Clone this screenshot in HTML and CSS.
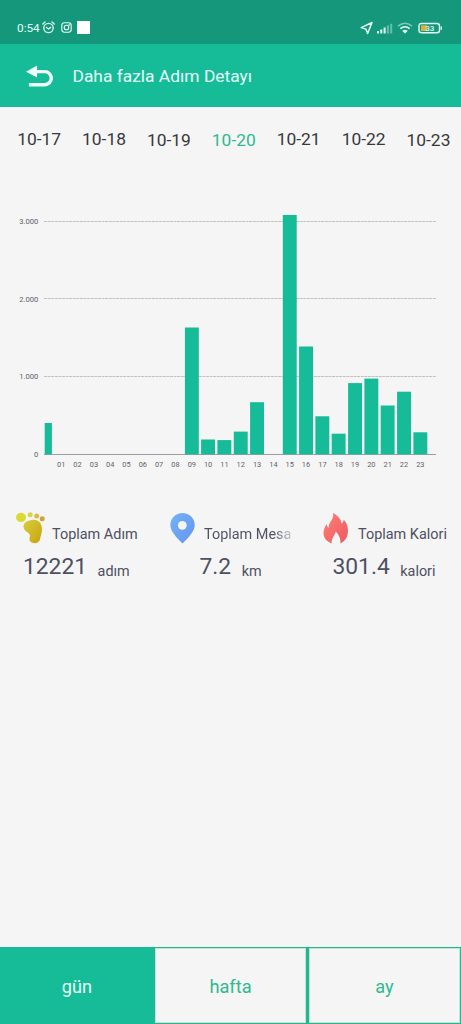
FILE: index.html
```html
<!DOCTYPE html>
<html lang="tr">
<head>
<meta charset="utf-8">
<title>Daha fazla Adım Detayı</title>
<link rel="stylesheet" href="styles.css">
</head>
<body>
<div class="screen">
  <div class="status">
    <span class="clock">0:54</span>
    <svg class="alarm" width="13" height="13" viewBox="0 0 13 13" fill="none" stroke="#e2fff6" stroke-width="1.3" stroke-linecap="round"><circle cx="6.5" cy="7" r="4.7"/><path d="M.8 3 3 1M12.2 3 10 1M4.5 6.5 6.5 8l2.2-1.6"/></svg>
    <svg class="insta" width="11" height="11" viewBox="0 0 11 11" fill="none" stroke="#e2fff6" stroke-width="1.1"><rect x=".8" y=".8" width="9.4" height="9.4" rx="2.6"/><circle cx="5.5" cy="5.5" r="2.3"/><circle cx="8.2" cy="2.8" r=".3"/></svg>
    <span class="square"></span>
    <svg class="system" width="83" height="14" viewBox="0 0 83 14">
      <path d="M1.2 6.6 12 1.5 7.6 12.5 5.9 8.1Z" fill="none" stroke="#e2fff6" stroke-width="1.5" stroke-linejoin="round"/>
      <g fill="#e2fff6"><rect x="17" y="10" width="2" height="2.5"/><rect x="20.3" y="8.5" width="2" height="4"/><rect x="23.6" y="6.5" width="2" height="6"/><g opacity=".4"><rect x="26.9" y="4.5" width="2" height="8"/><rect x="30.2" y="2.8" width="2" height="9.7"/></g></g>
      <g fill="none" stroke="#e2fff6" stroke-width="1.5"><path d="M38 5.2Q45 -.6 52 5.2" opacity=".5"/><path d="M40.4 7.7Q45 4 49.6 7.7"/></g><path d="M42.3 9.7Q45 7.8 47.7 9.7L45 12.7Z" fill="#e2fff6"/>
      <rect x="59" y="2.5" width="20.5" height="9.2" rx="2.5" fill="none" stroke="#e2fff6" stroke-width="1.4"/><rect x="61" y="4.3" width="6" height="5.7" fill="#e2ae35"/><path d="M81.3 5.5v3.3" stroke="#e2fff6" stroke-width="1.4"/>
      <text class="charge" x="69.7" y="10.1">33</text>
    </svg>
  </div>
  <header class="header">
    <svg class="back" width="28" height="23" viewBox="0 0 28 23"><path d="M9 6.5h10.5a6 6 0 0 1 0 13.5H3" fill="none" stroke="#effffa" stroke-width="3.5"/><path d="M0 6.5 11.5 0v12.5Z" fill="#effffa"/></svg>
    <h1 class="title">Daha fazla Adım Detayı</h1>
  </header>
  <nav class="dates">
    <span>10-17</span><span>10-18</span><span class="low">10-19</span><span class="low current">10-20</span><span>10-21</span><span>10-22</span><span class="low">10-23</span>
  </nav>
  <svg class="chart" width="461" height="280" viewBox="0 200 461 280">
    <g class="grid"><path d="M44 221.5H436M44 298.5H436M44 376.5H436"/></g>
    <path class="axis" d="M44 454.5H436"/>
    <g class="bars">
      <rect x="44.7" y="423" width="7.2" height="31.3"/>
      <rect x="184.9" y="327.5" width="13.9" height="126.8"/>
      <rect x="201.1" y="439.5" width="13.9" height="14.8"/>
      <rect x="217.4" y="440.1" width="13.9" height="14.2"/>
      <rect x="233.8" y="431.6" width="13.9" height="22.7"/>
      <rect x="250.1" y="402.2" width="13.9" height="52.1"/>
      <rect x="282.8" y="215" width="13.9" height="239.3"/>
      <rect x="299.1" y="346.5" width="13.9" height="107.8"/>
      <rect x="315.4" y="416.3" width="13.9" height="38"/>
      <rect x="331.7" y="433.7" width="13.9" height="20.6"/>
      <rect x="348.1" y="383.1" width="13.9" height="71.2"/>
      <rect x="364.4" y="378.6" width="13.9" height="75.7"/>
      <rect x="380.7" y="405.5" width="13.9" height="48.8"/>
      <rect x="397.1" y="391.7" width="13.9" height="62.6"/>
      <rect x="413.4" y="432.3" width="13.9" height="22"/>
    </g>
    <g class="tick scale"><text x="38.4" y="223.9">3.000</text><text x="38.4" y="301.5">2.000</text><text x="38.4" y="379.1">1.000</text><text x="38.4" y="456.9">0</text></g>
    <g class="tick hours">
      <text x="61.2" y="467">01</text><text x="77.5" y="467">02</text><text x="93.9" y="467">03</text><text x="110.2" y="467">04</text><text x="126.5" y="467">05</text><text x="142.8" y="467">06</text><text x="159.1" y="467">07</text><text x="175.4" y="467">08</text><text x="191.8" y="467">09</text><text x="208.1" y="467">10</text><text x="224.4" y="467">11</text><text x="240.7" y="467">12</text><text x="257.1" y="467">13</text><text x="273.4" y="467">14</text><text x="289.7" y="467">15</text><text x="306" y="467">16</text><text x="322.4" y="467">17</text><text x="338.7" y="467">18</text><text x="355" y="467">19</text><text x="371.3" y="467">20</text><text x="387.7" y="467">21</text><text x="404" y="467">22</text><text x="420.3" y="467">23</text>
    </g>
  </svg>
  <section class="stats">
    <div class="stat steps">
      <div class="label"><svg width="32" height="32" viewBox="0 0 32 32"><defs><linearGradient id="foot" x1="0" y1="0" x2="1" y2="1"><stop offset="0" stop-color="#d6cf3b"/><stop offset="1" stop-color="#caa20f"/></linearGradient></defs><ellipse cx="5" cy="5.4" rx="5" ry="4.6" fill="#dbda31"/><circle cx="14.2" cy="2.8" r="2.5" fill="#dbd24b"/><circle cx="20.7" cy="4" r="2.5" fill="#d8bd43"/><circle cx="26.2" cy="6.8" r="2.5" fill="#cfa536"/><path d="M16 8C22 7 26 11 26 17C26 22 24.5 24 24 27.5C23 31.5 17 32.2 14.5 29.8C12 27 15 24.5 13.5 22.2C11.8 20 7.5 19 7.5 14.6C7.5 10.5 11.5 8.5 16 8Z" fill="url(#foot)"/></svg><span>Toplam Adım</span></div>
      <div class="value"><b>12221</b><span>adım</span></div>
    </div>
    <div class="stat distance">
      <div class="label"><svg width="26" height="32" viewBox="0 0 26 32"><defs><linearGradient id="pin" x1="0" y1="0" x2="1" y2="1"><stop offset="0" stop-color="#73b4f4"/><stop offset="1" stop-color="#6592f2"/></linearGradient></defs><path d="M12.5 1C5.8 1 .3 6.2.3 13c0 6.3 6.2 12.5 12.2 18.5C18.5 25.5 24.7 19.3 24.7 13 24.7 6.2 19.2 1 12.5 1Z" fill="url(#pin)"/><circle cx="12.3" cy="13.3" r="4.4" fill="#f5f5f5"/></svg><span class="faded">Toplam Mesa</span></div>
      <div class="value"><b>7.2</b><span>km</span></div>
    </div>
    <div class="stat calories">
      <div class="label"><svg width="26" height="32" viewBox="0 0 26 32"><defs><linearGradient id="fire" x1="0" y1="0" x2="1" y2="1"><stop offset="0" stop-color="#ff8179"/><stop offset="1" stop-color="#ef5960"/></linearGradient></defs><path d="M10 1C15 3.5 18.2 7.5 18.5 11.5 20 10.7 20.5 9.2 20.7 7.5 24 11 25.5 16 24.8 21 24.3 26 21.5 29.5 17.5 31.4 17.8 26.5 15.8 22.5 12.8 19.5 12 23 8.2 26.5 8.6 31.4 3.5 29.5.2 25.6.5 20.5.7 17 2.1 14 3.8 12.2 4 14 4.5 15 5.8 15.7 5.2 10 11.5 7.5 10 1Z" fill="url(#fire)"/></svg><span>Toplam Kalori</span></div>
      <div class="value"><b>301.4</b><span>kalori</span></div>
    </div>
  </section>
  <nav class="tabs"><span class="tab active">gün</span><span class="tab middle">hafta</span><span class="tab last">ay</span></nav>
</div>
</body>
</html>
```
FILE: styles.css
```css
* { box-sizing: border-box; }
body { margin: 0; background: #f5f5f5; font-family: Roboto, "Noto Sans", sans-serif; }
.screen { width: 461px; height: 1024px; display: flex; flex-direction: column; overflow: hidden; }
.status { height: 44px; background: #15977b; display: flex; align-items: center; padding: 11px 18px 0 17px; color: #e2fff6; flex: none; }
.clock { font-size: 11.8px; width: 25px; white-space: nowrap; }
.insta { margin-left: 5.5px; }
.square { width: 13px; height: 13px; background: #fff; margin-left: 5.5px; }
.system { margin-left: auto; }
.charge { font-size: 8px; font-weight: 500; text-anchor: middle; fill: #e2fff6; }
.header { height: 63px; background: #16bb98; display: flex; align-items: center; padding: 0 26px; flex: none; }
.back { margin-top: 1px; width: 27px; }
.title { margin: 1px 0 0 19.5px; font-size: 17.4px; font-weight: 400; color: #e5fff7; white-space: nowrap; }
.dates { height: 93px; padding: 22px 0 0 6.7px; display: flex; flex: none; font-size: 17.4px; line-height: 21px; color: #38383c; }
.dates span { width: 64.9px; flex: none; text-align: center; }
.dates .low { padding-top: 1px; }
.dates .current { color: #2dba91; }
.chart { display: block; flex: none; }
.grid { stroke: #c2c2c4; stroke-width: 1; stroke-dasharray: 3 .6; }
.axis { stroke: #9c9ea1; stroke-width: 1; }
.bars { fill: #16bb98; }
.tick { font-size: 7.6px; fill: #60636c; }
.hours { font-size: 7.4px; }
.scale { text-anchor: end; }
.hours { text-anchor: middle; }
.stats { display: flex; padding: 32px 0 0 16px; color: #4d5062; flex: none; }
.stat { width: 154px; flex: none; }
.label { display: flex; align-items: flex-start; height: 37px; font-size: 14.45px; line-height: 18px; white-space: nowrap; }
.label svg { flex: none; }
.label span { margin: 14px 0 0 4px; }
.distance .label span { margin-left: 8px; }
.calories .label span { margin-left: 9px; }
.calories { margin-left: -1px; }
.label .faded { background: linear-gradient(90deg, #4d5062 80%, #c4c5cc 100%); background-clip: text; color: transparent; }
.value { display: flex; align-items: baseline; padding-left: 7px; line-height: 36px; white-space: nowrap; }
.value b { font-size: 22.8px; font-weight: 400; }
.value span { font-size: 14.4px; margin-left: 10.5px; padding-top: 2px; position: relative; top: 2px; }
.distance .value { padding-left: 29.5px; }
.calories .value { padding-left: 9.5px; }
.tabs { height: 77px; margin-top: auto; display: flex; flex: none; }
.tab { width: 154px; border: 1px solid #24b78d; color: #2dba91; font-size: 18.2px; display: flex; align-items: center; justify-content: center; padding-top: 1px; box-shadow: inset 0 0 0 1px rgba(36, 183, 141, .25); }
.tab.middle { border-right-width: 2px; }
.tab.last { width: 153px; }
.tab.active { background: #16bb98; border-color: #16bb98; color: #e5fff7; }
```
